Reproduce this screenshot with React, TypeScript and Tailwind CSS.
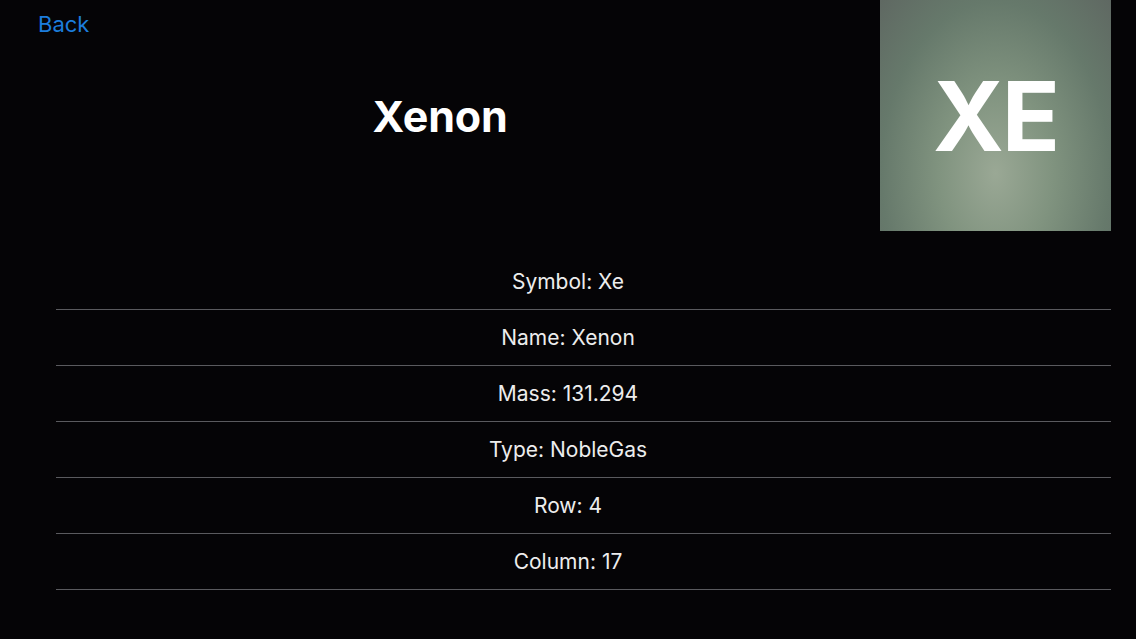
const rows = [
  "Symbol: Xe",
  "Name: Xenon",
  "Mass: 131.294",
  "Type: NobleGas",
  "Row: 4",
  "Column: 17",
];

const App = () => {
  return (
    <div className="w-[1136px] h-[639px] bg-[#050406] text-white font-['Inter',sans-serif] overflow-hidden">
      <div className="flex pr-[25px]">
        <div className="flex-1 flex flex-col">
          <div className="pl-[38px] pt-[10px]">
            <span className="text-[22px] text-[#1c7ddc] leading-[28px]">Back</span>
          </div>
          <div className="flex justify-center mt-[50px]">
            <h1 className="text-[43px] font-bold leading-[56px] tracking-[-0.2px]">Xenon</h1>
          </div>
        </div>
        <div className="w-[231px] h-[231px] flex items-center justify-center bg-[radial-gradient(ellipse_at_50%_75%,#9aa895_0%,#80937f_35%,#66796b_70%,#5f6862_100%)]">
          <span className="text-[96px] font-bold leading-none tracking-[-2px] text-white">XE</span>
        </div>
      </div>
      <div className="mt-[23px]">
        {rows.map((r) => (
          <div key={r} className="flex flex-col">
            <div className="h-[55px] flex items-center justify-center">
              <span className="text-[21px] text-[#ededed]">{r}</span>
            </div>
            <div className="h-px ml-[56px] mr-[25px] bg-[#5a5a5e]" />
          </div>
        ))}
      </div>
    </div>
  );
};

export default App;
